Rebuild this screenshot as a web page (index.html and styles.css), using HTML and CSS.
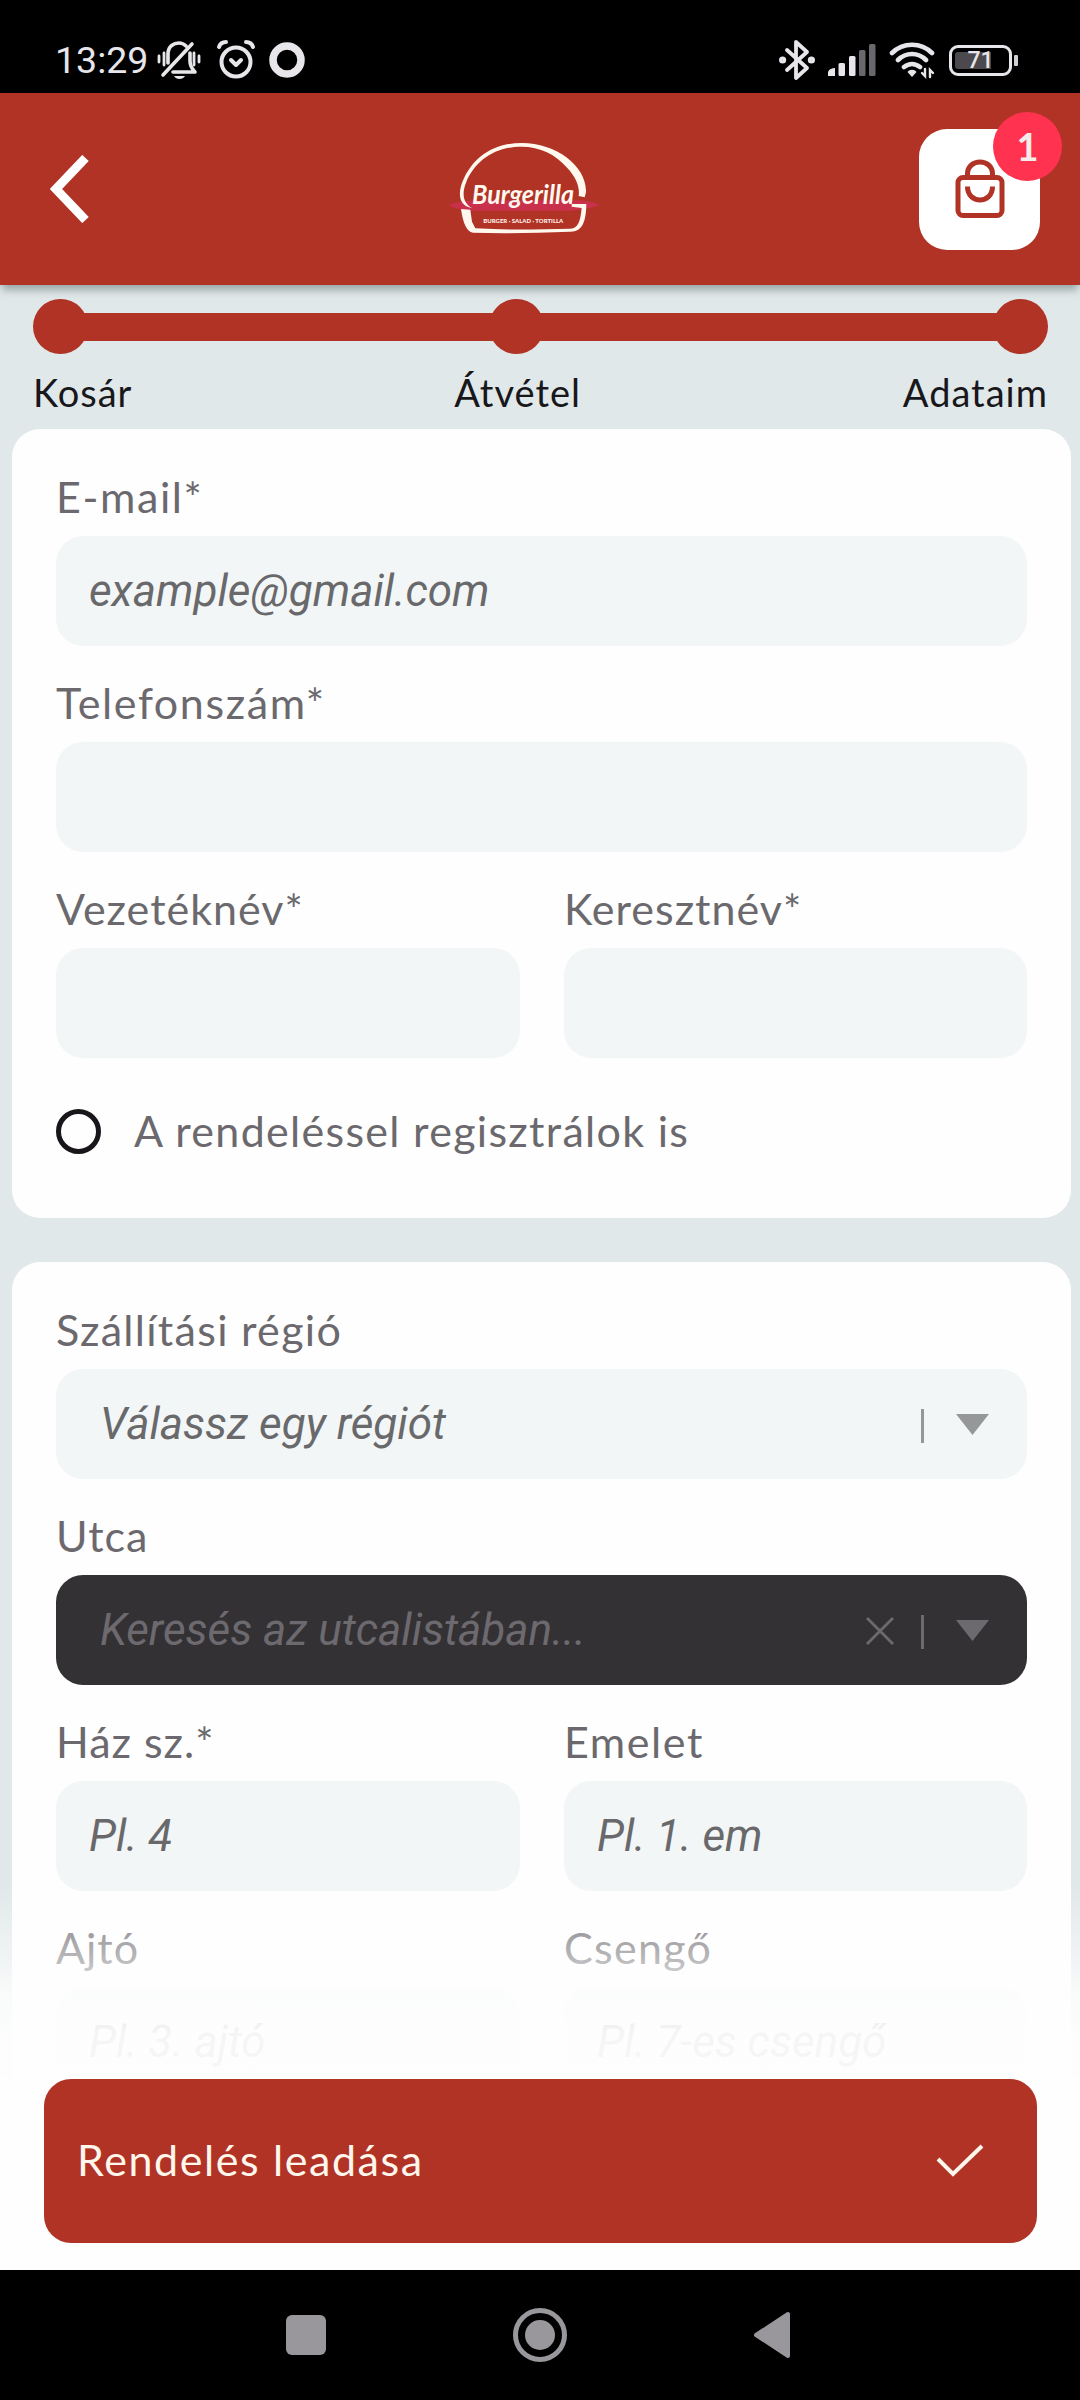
FILE: index.html
```html
<!DOCTYPE html>
<html lang="hu">
<head>
<meta charset="utf-8">
<title>Burgerilla – Adataim</title>
<link rel="stylesheet" href="styles.css">
</head>
<body>
<div class="screen">
  <div class="status">
    <div class="status-side">
      <span class="clock">13:29</span>
      <svg class="ic-mute" width="46" height="42" viewBox="0 0 46 42" fill="none" stroke="#e8e6ea" stroke-width="3.6" stroke-linecap="round" stroke-linejoin="round"><path d="M36 5 7 36M12 24V15C12 7 18 4 23 4c3 0 5 1 7 3M34 14v8c0 5 2 8 5 11H17"/><path d="M8 14v12M3 17v6M38 14v12M43 17v6" stroke-width="2.8"/><path d="M18 37h11c-2 4-9 4-11 0z" fill="#e8e6ea" stroke="none"/></svg>
      <svg class="ic-alarm" width="40" height="42" viewBox="0 0 40 42" fill="none" stroke="#e8e6ea" stroke-width="4" stroke-linecap="round" stroke-linejoin="round"><circle cx="20" cy="23" r="14.5"/><path d="m15 21 5 5 5-5"/><path d="M3 8c1-3 4-5 7-5M37 8c-1-3-4-5-7-5"/></svg>
      <svg width="36" height="38" viewBox="0 0 36 38" fill="none" stroke="#e8e6ea" stroke-width="7.5"><circle cx="18" cy="19" r="14"/></svg>
    </div>
    <div class="status-side">
      <svg width="36" height="42" viewBox="0 0 36 42" fill="none" stroke="#e8e6ea" stroke-width="3.8" stroke-linejoin="round" stroke-linecap="round"><path d="M8 11 28 29 17 39V3l11 10L8 31"/><circle cx="3.6" cy="21" r="1.7"/><circle cx="32.4" cy="21" r="1.7"/></svg>
      <svg class="ic-signal" width="48" height="34" viewBox="0 0 48 34"><g fill="#e8e6ea"><path d="M0 33v-4c1-3 4-4 7-4v8z"/><rect x="10.500" y="20" width="6.500" height="13" rx="1.500"/><rect x="21" y="13" width="6.500" height="20" rx="1.500"/></g><g fill="#6a686c"><rect x="31" y="7" width="6.500" height="26" rx="1.500"/><rect x="41" y="1" width="6.500" height="32" rx="1.500"/></g></svg>
      <svg class="ic-wifi" width="46" height="38" viewBox="0 0 46 38" fill="none" stroke="#e8e6ea" stroke-width="4.600" stroke-linecap="round"><path d="M3 12c11-11 29-11 40 0M9 19c8-8 20-8 28 0M15 26c5-4 11-4 16 0"/><path d="m23 36-4.500-5c2-3 7-3 9 0z" fill="#e8e6ea" stroke="none"/><path d="M36 28v7l-3-3M41 36v-7l3 3" stroke-width="2.400"/></svg>
      <span class="battery"><span class="charge">71</span></span><span class="battery-tip"></span>
    </div>
  </div>

  <header class="topbar">
    <svg class="back" width="80" height="68" viewBox="0 0 80 68" fill="none" stroke="#fff" stroke-width="9"><path d="M35.500 3 6 34l29.500 31"/></svg>
    <svg class="logo" width="190" height="120" viewBox="0 0 570 360">
      <path d="M55 228c40-14 80-14 130-14h245c35 0 60 6 80 14-28 10-55 14-90 17H130c-32 0-58-8-75-17z" fill="#c9304c"/>
      <path d="M126 237C84 232 84 190 98 157 128 85 190 42 275 42c105 0 196 70 193 148l-4 15-18-4c4-27-8-56-34-84C377 76 330 53 275 53c-80 0-140 42-167 108-12 30-11 60 18 76z" fill="#fff8ee"/>
      <path d="m93 240 28 2 5 36 10 20c100 6 200 3 283 1 24 0 32-18 36-62l-30-4v-8h44c-1 50-10 84-49 83-100 4-200 6-291 3-20-3-30-30-36-71z" fill="#fff8ee"/>
      <text x="126" y="226" class="logo-name" textLength="306" lengthAdjust="spacingAndGlyphs">Burgerilla</text>
      <text x="160" y="281" class="logo-tag" textLength="240" lengthAdjust="spacingAndGlyphs">BURGER · SALAD · TORTILLA</text>
    </svg>
    <div class="cart">
      <svg width="50" height="60" viewBox="0 0 50 60" fill="none" stroke="#b03326" stroke-width="5"><rect x="3" y="18.500" width="44" height="38" rx="5"/><path d="M12.500 18v-3C12.500-1 37.500-1 37.500 15v3M12.500 27.500c0 18 25 18 25 0"/></svg>
      <span class="badge">1</span>
    </div>
  </header>

  <main class="content">
    <div class="steps">
      <div class="track"><i class="dot"></i><i class="line"></i><i class="dot"></i><i class="line"></i><i class="dot"></i></div>
      <div class="step-names"><span>Kosár</span><span>Átvétel</span><span>Adataim</span></div>
    </div>

    <section class="card">
      <div class="field"><label class="label l-wider">E-mail*</label><div class="input">example@gmail.com</div></div>
      <div class="field"><label class="label l-wider">Telefonszám*</label><div class="input"></div></div>
      <div class="pair">
        <div class="field"><label class="label">Vezetéknév*</label><div class="input"></div></div>
        <div class="field"><label class="label">Keresztnév*</label><div class="input"></div></div>
      </div>
      <div class="radio"><i class="ring"></i><span class="label l-wide">A rendeléssel regisztrálok is</span></div>
    </section>

    <section class="card card-address">
      <div class="field"><label class="label l-wide">Szállítási régió</label>
        <div class="input select"><span class="value">Válassz egy régiót</span><i class="bar"></i><svg width="33" height="21" viewBox="0 0 33 21"><path d="M0 0h33L16.500 21z" fill="#969799"/></svg></div></div>
      <div class="field"><label class="label">Utca</label>
        <div class="input select dark"><span class="value">Keresés az utcalistában...</span><svg class="clear" width="28" height="28" viewBox="0 0 28 28" fill="none" stroke="#6d6a6f" stroke-width="2.800"><path d="m1 1 26 26M27 1 1 27"/></svg><i class="bar"></i><svg width="33" height="21" viewBox="0 0 33 21"><path d="M0 0h33L16.500 21z" fill="#6d6a6f"/></svg></div></div>
      <div class="pair">
        <div class="field"><label class="label">Ház sz.*</label><div class="input">Pl. 4</div></div>
        <div class="field"><label class="label l-wider">Emelet</label><div class="input">Pl. 1. em</div></div>
      </div>
      <div class="pair">
        <div class="field"><label class="label">Ajtó</label><div class="input">Pl. 3. ajtó</div></div>
        <div class="field"><label class="label l-wide">Csengő</label><div class="input">Pl. 7-es csengő</div></div>
      </div>
    </section>
    <div class="fade"></div>
  </main>

  <footer class="footer">
    <div class="submit"><span>Rendelés leadása</span><svg width="48" height="36" viewBox="0 0 48 36" fill="none" stroke="#fff6ec" stroke-width="4"><path d="m2 16 15 15L46 3"/></svg></div>
  </footer>

  <nav class="navbar">
    <svg width="40" height="40" viewBox="0 0 40 40"><rect width="40" height="40" rx="6" fill="#99979b"/></svg>
    <svg width="56" height="56" viewBox="0 0 56 56"><circle cx="28" cy="28" r="24.500" fill="none" stroke="#99979b" stroke-width="5"/><circle cx="28" cy="28" r="15" fill="#99979b"/></svg>
    <svg width="38" height="48" viewBox="0 0 38 48"><path d="M35 3v42L3 24z" fill="#99979b" stroke="#99979b" stroke-width="4" stroke-linejoin="round"/></svg>
  </nav>
</div>
</body>
</html>
```
FILE: styles.css
```css
* { box-sizing: border-box; }
body { margin: 0; background: #e1e8e9; font-family: Lato, "Open Sans", sans-serif; }
svg { display: block; flex: none; }
.screen { width: 1080px; height: 2400px; display: flex; flex-direction: column; overflow: hidden; }

.status { height: 93px; flex: none; background: #000; display: flex; justify-content: space-between; padding: 38px 62px 11px 55px; font-family: Roboto, sans-serif; }
.status-side { display: flex; align-items: center; }
.clock { font-size: 37.5px; line-height: 44px; color: #e8e6ea; width: 101px; }
.ic-alarm { margin: 0 13px 0 14px; }
.ic-signal { margin: 0 13px 0 13px; }
.ic-wifi { margin-right: 14px; }
.battery { width: 63px; height: 31px; border: 3.5px solid #e8e6ea; border-radius: 9px; padding: 4px 3px; display: flex; }
.charge { flex: 1; background: linear-gradient(90deg, #4b494d 36px, #000 36px); color: #e8e6ea; font-size: 23px; line-height: 17px; font-weight: 500; text-align: center; border-radius: 3px; }
.battery-tip { width: 4px; height: 11px; background: #d0ced2; margin-left: 2px; border-radius: 1px; }

.topbar { height: 192px; flex: none; background: #b03326; display: flex; justify-content: space-between; align-items: center; padding: 0 40px 0 50px; box-shadow: 0 7px 8px -2px rgba(80, 100, 100, .5); z-index: 2; }
.logo-name { font: italic 700 82px Lato, sans-serif; fill: #fff8ee; }
.logo-tag { font: 900 17px Lato, sans-serif; fill: #fff0e6; }
.cart { width: 121px; height: 121px; border-radius: 28px; background: #fff; position: relative; display: flex; justify-content: center; align-items: center; }
.badge { position: absolute; right: -22px; top: -17px; width: 69px; height: 69px; border-radius: 50%; background: #ff3350; color: #f4ece9; font-size: 38px; font-weight: 700; line-height: 68px; text-align: center; }

.content { height: 1793px; flex: none; overflow: hidden; position: relative; padding: 14px 9px 0 12px; background: #e1e8e9; }
.steps { height: 130px; padding: 0 23px 0 21px; }
.track { display: flex; align-items: center; height: 55px; }
.dot { width: 55px; height: 55px; border-radius: 50%; background: #b03326; }
.line { flex: 1; height: 28px; margin: 0 -8px; background: #b03326; }
.track .line:nth-child(2) { flex: 0 0 417px; }
.step-names { display: flex; justify-content: space-between; font-size: 38px; line-height: 46px; margin-top: 15px; color: #18171b; letter-spacing: 1px; }

.card { background: #fefefe; border-radius: 28px; padding: 42px 44px 0; height: 789px; margin-bottom: 44px; display: flex; flex-direction: column; gap: 31px; }
.card-address { height: 900px; }
.field { display: flex; flex-direction: column; gap: 13px; flex: 1; }
.card > .field { flex: none; }
.label { font-size: 43px; line-height: 52px; color: #6b696d; letter-spacing: 1px; white-space: nowrap; }
.l-wide { letter-spacing: 1.3px; }
.l-wider { letter-spacing: 1.6px; }
.input { height: 110px; border-radius: 27px; background: #f3f6f7; padding: 0 33px; font: italic 44px/110px Roboto, sans-serif; color: #69696c; white-space: nowrap; }
.pair { display: grid; grid-template-columns: 464px 463px; column-gap: 44px; }
.radio { display: flex; align-items: center; gap: 33px; margin-top: 16px; height: 52px; }
.ring { width: 45px; height: 45px; border: 5px solid #18161a; border-radius: 50%; }
.select { display: flex; align-items: center; padding: 0 38px 0 44px; }
.value { flex: 1; }
.bar { width: 3px; height: 34px; background: #969799; margin: 4px 32px 0 0; }
.clear { margin-right: 27px; margin-top: 2px; }
.dark { background: #343135; color: #6d6a6f; }
.dark .bar { background: #6d6a6f; }
.fade { position: absolute; left: 0; right: 0; bottom: 0; height: 195px; background: linear-gradient(rgba(254,254,254,0), rgba(254,254,254,.5) 37%, rgba(254,254,254,.82) 55%, rgba(254,254,254,.94) 78%, rgba(254,254,254,.95)); }

.footer { height: 192px; flex: none; background: #fefefe; padding: 1px 43px 0 44px; }
.submit { height: 164px; border-radius: 27px; background: #b03326; color: #fff6ec; font-size: 43px; letter-spacing: 1.6px; display: flex; align-items: center; justify-content: space-between; padding: 0 53px 0 33px; }
.submit span { padding-bottom: 4px; }

.navbar { height: 130px; flex: none; background: #000; display: flex; align-items: center; justify-content: space-between; padding: 0 289px 0 286px; }
```
